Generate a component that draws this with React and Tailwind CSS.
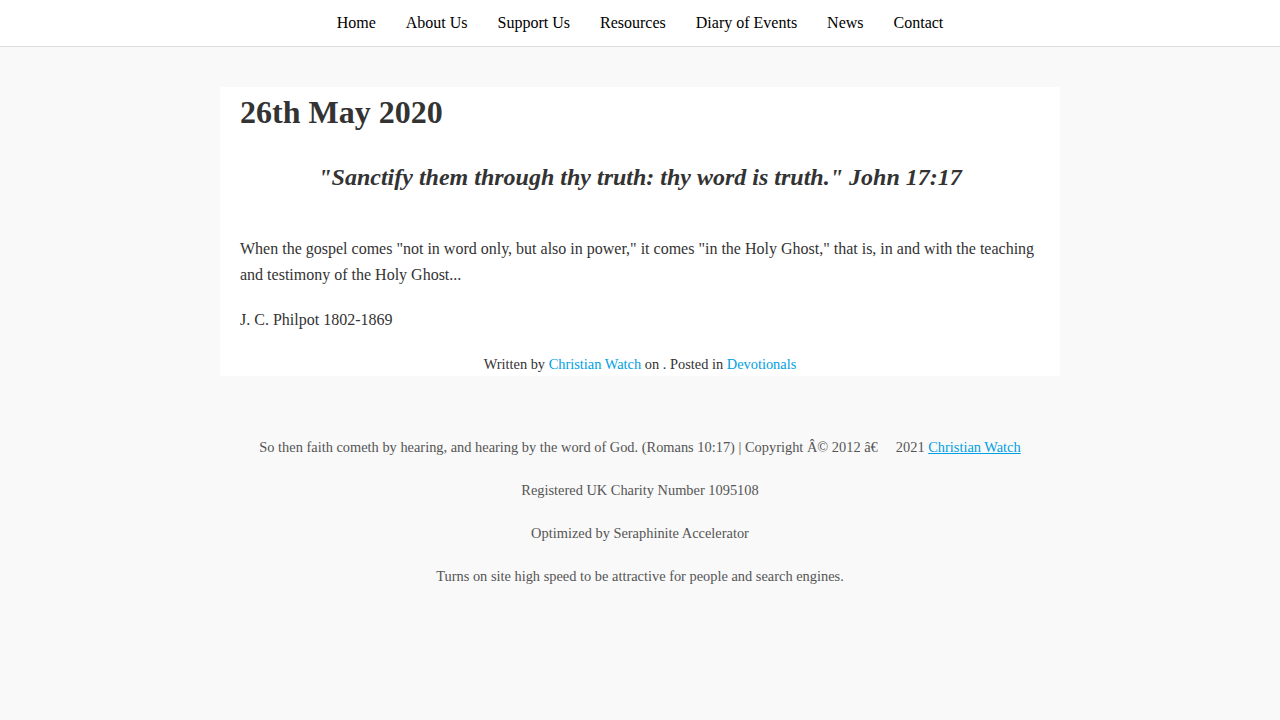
const navItems = ["Home", "About Us", "Support Us", "Resources", "Diary of Events", "News", "Contact"];

export default function App() {
  return (
    <div className="min-h-[720px] bg-[#f9f9f9] font-['Liberation_Serif',serif] text-[#333]">
      <nav className="h-[47px] bg-white border-b border-[#dddddd] flex justify-center items-center">
        {navItems.map((item) => (
          <a key={item} href="#" className="px-[15px] text-[16px] text-black leading-[22px] pb-[1px]">
            {item}
          </a>
        ))}
      </nav>

      <main className="pt-[40px]">
        <article className="w-[840px] mx-auto bg-white px-[20px]">
          <h1 className="text-[32px] font-bold leading-[48px] pt-[1px]">26th May 2020</h1>
          <h2 className="text-center italic font-bold text-[24px] leading-[30px] mt-[26px]">
            "Sanctify them through thy truth: thy word is truth." John 17:17
          </h2>
          <p className="text-[16px] leading-[26px] mt-[44px]">
            When the gospel comes "not in word only, but also in power," it comes "in the Holy Ghost," that is, in and with
            the teaching and testimony of the Holy Ghost...
          </p>
          <p className="text-[16px] leading-[26px] mt-[19px]">J. C. Philpot 1802-1869</p>
          <p className="text-center text-[14.4px] leading-[20px] mt-[21px] pb-[2px]">
            Written by <a href="#" className="text-[#009fe3]">Christian Watch</a> on . Posted in{" "}
            <a href="#" className="text-[#009fe3]">Devotionals</a>
          </p>
        </article>
      </main>

      <footer className="text-center text-[14.4px] leading-[20px] text-[#555] pt-[61px] flex flex-col gap-[23px]">
        <p>
          So then faith cometh by hearing, and hearing by the word of God. (Romans 10:17) | Copyright Â© 2012 â€
          <span className="inline-block w-[18px]"></span>2021{" "}
          <a href="#" className="text-[#009fe3] underline">Christian Watch</a>
        </p>
        <p>Registered UK Charity Number 1095108</p>
        <p>Optimized by Seraphinite Accelerator</p>
        <p>Turns on site high speed to be attractive for people and search engines.</p>
      </footer>
    </div>
  );
}
